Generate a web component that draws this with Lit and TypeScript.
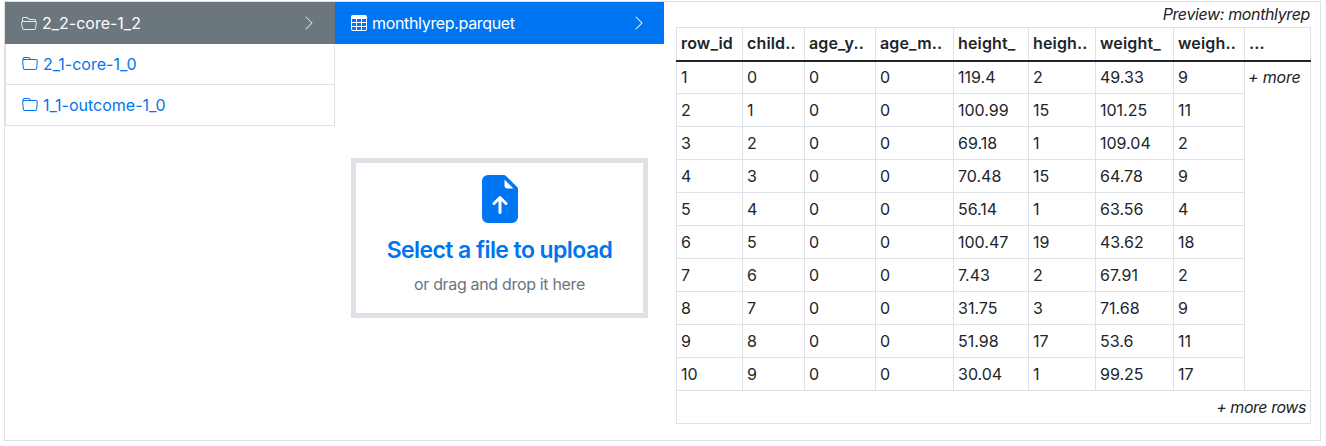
import { LitElement, html, css, svg } from "lit";
import { customElement } from "lit/decorators.js";

const icon = (d: string, cls: string) =>
  html`<svg class=${cls} viewBox="0 0 16 16" fill="currentColor">${svg`<path fill-rule="evenodd" d=${d}></path>`}</svg>`;

const FOLDER = "M.54 3.87.5 3a2 2 0 0 1 2-2h3.672a2 2 0 0 1 1.414.586l.828.828A2 2 0 0 0 9.828 3h3.982a2 2 0 0 1 1.992 2.181l-.637 7A2 2 0 0 1 13.174 14H2.826a2 2 0 0 1-1.991-1.819l-.637-7a1.99 1.99 0 0 1 .342-1.31zM2.19 4a1 1 0 0 0-.996 1.09l.637 7a1 1 0 0 0 .995.91h10.348a1 1 0 0 0 .995-.91l.637-7A1 1 0 0 0 13.81 4H2.19zm4.69-1.707A1 1 0 0 0 6.172 2H2.5a1 1 0 0 0-1 .981l.006.139C1.72 3.042 1.95 3 2.19 3h5.396l-.707-.707z";
const FOLDER_OPEN = "M1 3.5A1.5 1.5 0 0 1 2.5 2h2.764c.958 0 1.76.56 2.311 1.184C7.985 3.648 8.48 4 9 4h4.5A1.5 1.5 0 0 1 15 5.5v.64c.57.265.94.876.856 1.546l-.64 5.124A2.5 2.5 0 0 1 12.733 15H3.266a2.5 2.5 0 0 1-2.481-2.19l-.64-5.124A1.5 1.5 0 0 1 1 6.14V3.5zM2 6h12v-.5a.5.5 0 0 0-.5-.5H9c-.964 0-1.71-.629-2.174-1.154C6.374 3.334 5.82 3 5.264 3H2.5a.5.5 0 0 0-.5.5V6zm-.367 1a.5.5 0 0 0-.496.562l.64 5.124A1.5 1.5 0 0 0 3.266 14h9.468a1.5 1.5 0 0 0 1.489-1.314l.64-5.124A.5.5 0 0 0 14.367 7H1.633z";
const TABLE = "M0 2a2 2 0 0 1 2-2h12a2 2 0 0 1 2 2v12a2 2 0 0 1-2 2H2a2 2 0 0 1-2-2V2zm15 2h-4v3h4V4zm0 4h-4v3h4V8zm0 4h-4v3h3a1 1 0 0 0 1-1v-2zm-5 3v-3H6v3h4zm-5 0v-3H1v2a1 1 0 0 0 1 1h3zm-4-4h4V8H1v3zm0-4h4V4H1v3zm5-3v3h4V4H6zm4 4H6v3h4V8z";
const CHEVRON = "M4.646 1.646a.5.5 0 0 1 .708 0l6 6a.5.5 0 0 1 0 .708l-6 6a.5.5 0 0 1-.708-.708L10.293 8 4.646 2.354a.5.5 0 0 1 0-.708z";
const UPLOAD = "M9.293 0H4a2 2 0 0 0-2 2v12a2 2 0 0 0 2 2h8a2 2 0 0 0 2-2V4.707A1 1 0 0 0 13.707 4L10 .293A1 1 0 0 0 9.293 0zM9.5 3.5v-2l3 3h-2a1 1 0 0 1-1-1zM6.354 9.854a.5.5 0 0 1-.708-.708l2-2a.5.5 0 0 1 .708 0l2 2a.5.5 0 0 1-.708.708L8.5 8.707V12.5a.5.5 0 0 1-1 0V8.707L6.354 9.854z";

const HEAD = ["row_id", "child..", "age_y..", "age_m..", "height_", "heigh..", "weight_", "weigh..", "..."];
const WIDTHS = [66, 62, 71, 78, 75, 67, 78, 71, 66];
const ROWS = [
  [1, 0, 0, 0, "119.4", 2, "49.33", 9],
  [2, 1, 0, 0, "100.99", 15, "101.25", 11],
  [3, 2, 0, 0, "69.18", 1, "109.04", 2],
  [4, 3, 0, 0, "70.48", 15, "64.78", 9],
  [5, 4, 0, 0, "56.14", 1, "63.56", 4],
  [6, 5, 0, 0, "100.47", 19, "43.62", 18],
  [7, 6, 0, 0, "7.43", 2, "67.91", 2],
  [8, 7, 0, 0, "31.75", 3, "71.68", 9],
  [9, 8, 0, 0, "51.98", 17, "53.6", 11],
  [10, 9, 0, 0, "30.04", 1, "99.25", 17],
];

@customElement("app-root")
export class AppRoot extends LitElement {
  static styles = css`
    :host {
      display: block;
      font-family: Inter, "Liberation Sans", sans-serif;
      font-size: 16px;
      line-height: 24px;
      color: #212529;
      padding: 1px 4px 0;
    }
    .frame {
      display: flex;
      width: 1317px;
      height: 440px;
      box-sizing: border-box;
      border: 1px solid #dee2e6;
    }
    .col {
      width: 330px;
      flex: none;
    }
    .col2 {
      width: 329px;
      flex: none;
    }
    .item {
      display: flex;
      align-items: center;
      height: 41px;
      box-sizing: border-box;
      padding: 0 16px;
      border: 1px solid #dee2e6;
      border-top: 0;
      color: #0075f2;
      background: #fff;
    }
    .item.top {
      height: 42px;
      border: 0;
      color: #fff;
    }
    .item.grey {
      background: #6b767d;
      padding-right: 18px;
    }
    .item.blue {
      background: #0075f2;
      padding-right: 17px;
    }
    .ic {
      width: 16px;
      height: 16px;
      flex: none;
      margin-right: 5px;
    }
    .name {
      flex: 1;
    }
    .file {
      letter-spacing: -0.33px;
    }
    .chev {
      width: 16px;
      height: 16px;
      flex: none;
      opacity: 0.8;
    }
    .blue .chev {
      opacity: 1;
    }
    .grey .ic {
      opacity: 0.85;
    }
    .drop {
      margin: 114px 16px 0;
      height: 160px;
      box-sizing: border-box;
      border: 5px solid #dee2e6;
      display: flex;
      flex-direction: column;
      align-items: center;
      background: #fff;
    }
    .up {
      width: 48px;
      height: 48px;
      color: #0075f2;
      margin-top: 12px;
    }
    .title {
      font-size: 23px;
      line-height: 29px;
      font-weight: 600;
      letter-spacing: -0.58px;
      color: #0075f2;
      margin-top: 13px;
      white-space: nowrap;
    }
    .sub {
      color: #6c757d;
      margin-top: 7px;
      white-space: nowrap;
      letter-spacing: -0.33px;
    }
    .preview {
      flex: 1;
      padding: 0 9px 0 12px;
      min-width: 0;
    }
    .cap {
      text-align: right;
      font-style: italic;
      height: 25px;
      line-height: 24px;
      letter-spacing: -0.37px;
      padding-right: 1px;
    }
    table {
      border-collapse: collapse;
      table-layout: fixed;
      width: 634px;
    }
    th,
    td {
      border: 1px solid #dee2e6;
      padding: 0 4px;
      height: 33px;
      box-sizing: border-box;
      text-align: left;
      white-space: nowrap;
      overflow: hidden;
    }
    th {
      font-weight: 600;
      letter-spacing: 0.15px;
      padding-bottom: 2px;
      border-bottom: 2px solid #212529;
    }
    td.more {
      vertical-align: top;
      font-style: italic;
      padding: 3px 4px 0 3px;
      letter-spacing: -0.2px;
    }
    td.rows {
      text-align: right;
      font-style: italic;
      letter-spacing: -0.45px;
    }
  `;

  render() {
    return html`<div class="frame">
      <div class="col list">
        <div class="item top grey">
          ${icon(FOLDER_OPEN, "ic")}<span class="name">2_2-core-1_2</span>${icon(CHEVRON, "chev")}
        </div>
        <div class="item">${icon(FOLDER, "ic")}<span class="name">2_1-core-1_0</span></div>
        <div class="item">${icon(FOLDER, "ic")}<span class="name">1_1-outcome-1_0</span></div>
      </div>
      <div class="col2">
        <div class="item top blue">
          ${icon(TABLE, "ic")}<span class="name file">monthlyrep.parquet</span>${icon(CHEVRON, "chev")}
        </div>
        <div class="drop">
          ${icon(UPLOAD, "up")}
          <div class="title">Select a file to upload</div>
          <div class="sub">or drag and drop it here</div>
        </div>
      </div>
      <div class="preview">
        <div class="cap">Preview: monthlyrep</div>
        <table>
          <colgroup>${WIDTHS.map((w) => html`<col style="width:${w}px" />`)}</colgroup>
          <thead>
            <tr>${HEAD.map((h) => html`<th>${h}</th>`)}</tr>
          </thead>
          <tbody>
            ${ROWS.map(
              (r, i) => html`<tr>
                ${r.map((c) => html`<td>${c}</td>`)}
                ${i === 0 ? html`<td class="more" rowspan="10">+ more</td>` : ""}
              </tr>`
            )}
            <tr><td class="rows" colspan="9">+ more rows</td></tr>
          </tbody>
        </table>
      </div>
    </div>`;
  }
}
